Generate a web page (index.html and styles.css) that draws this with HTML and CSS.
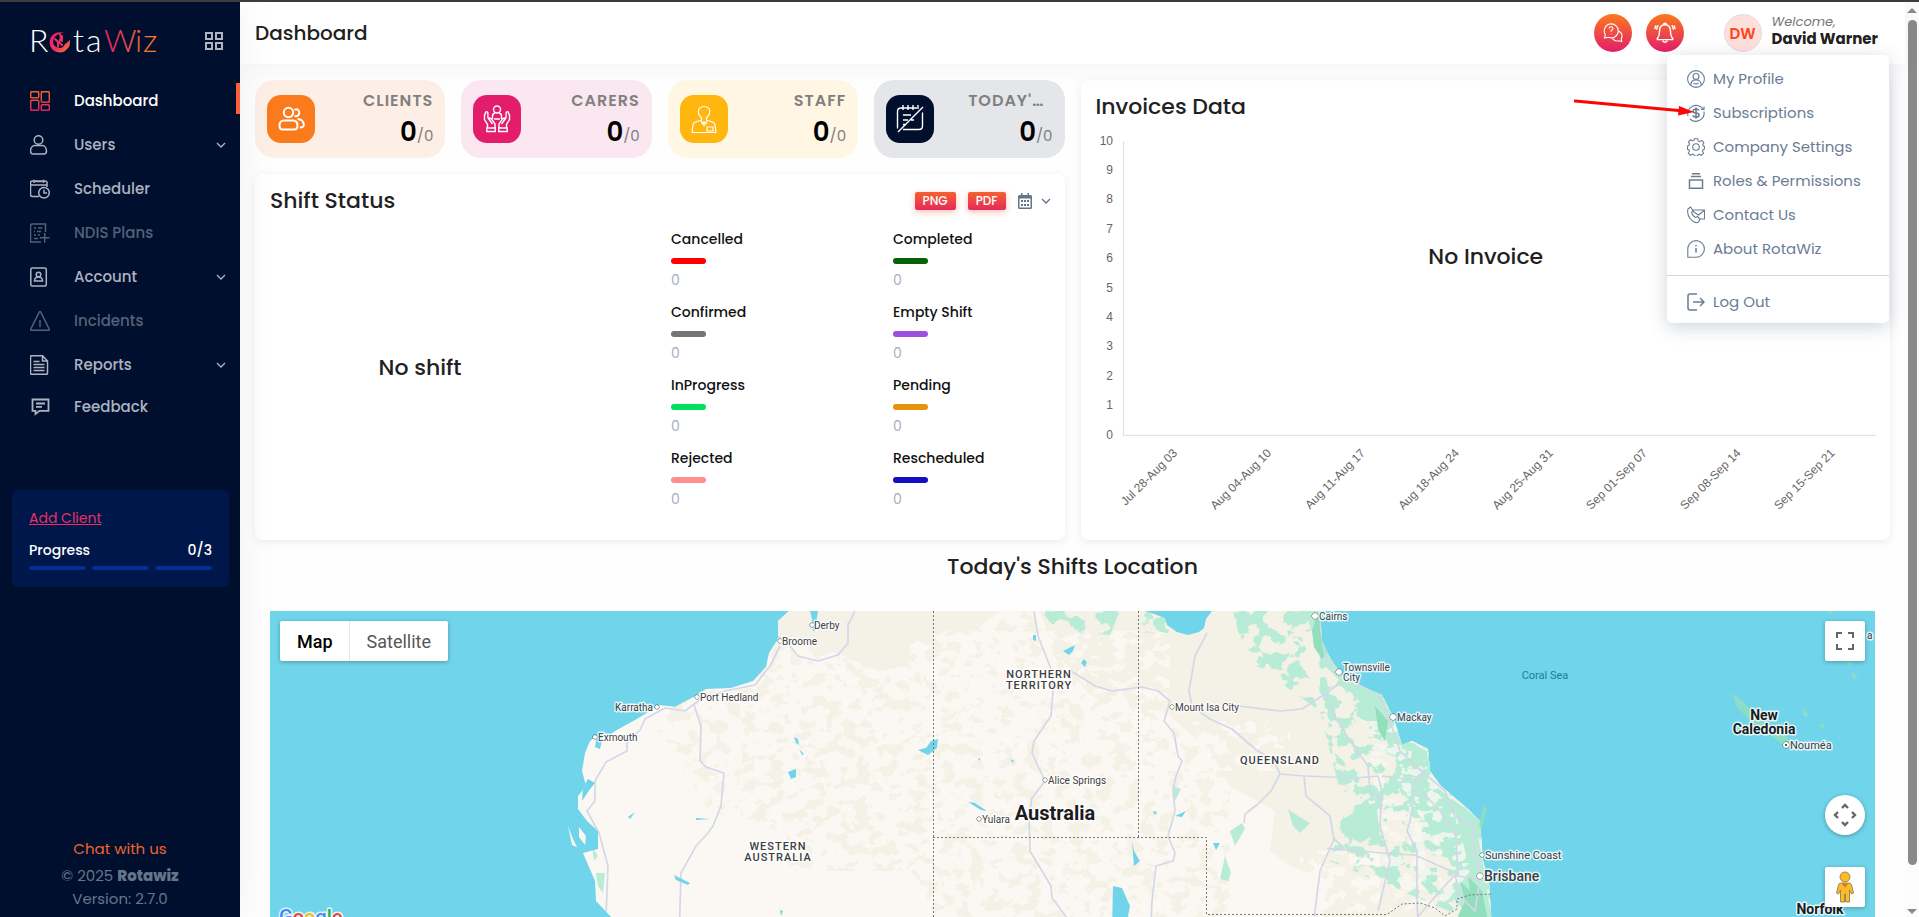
FILE: index.html
```html
<!DOCTYPE html>
<html lang="en">
<head>
<meta charset="utf-8">
<title>RotaWiz Dashboard</title>
<link rel="stylesheet" href="styles.css">
</head>
<body>
<div class="shell">
  <aside class="sidebar">
    <div class="brand">
      <svg class="logo" viewBox="0 0 128 32" role="img" aria-label="RotaWiz">
        <defs>
          <linearGradient id="wiz" gradientUnits="userSpaceOnUse" x1="72" y1="0" x2="127" y2="0"><stop offset="0" stop-color="#e61e6a"/><stop offset="1" stop-color="#f98a1c"/></linearGradient>
          <linearGradient id="swirl" x1="0" y1="0" x2="1" y2="1"><stop offset="0" stop-color="#e61e6a"/><stop offset=".6" stop-color="#ee3560"/><stop offset="1" stop-color="#f98a1c"/></linearGradient>
        </defs>
        <g class="logo-text">
          <text x="-2" y="27" fill="#fff">R</text><text x="42" y="27" fill="#fff">t</text><text x="55" y="27" fill="#fff">a</text>
          <text x="73" y="27" fill="url(#wiz)">W</text><text x="104" y="27" fill="url(#wiz)">i</text><text x="112" y="27" fill="url(#wiz)">z</text>
        </g>
        <path fill="url(#swirl)" d="M33 8C24 5 17 12 19 20c2 8 13 10 17 4 3-2 3-5 3-9-2 1-3 3-5 4l-2 3c-3 2-7 1-9-2-2-4 0-9 5-11 2-1 4-1 5-1Z"/>
        <path d="M24 14l3 3v5m2-13 1 4-2 4 3 3M31 11v5" stroke="#e8305f" stroke-width="2" fill="none" stroke-linecap="round"/>
      </svg>
      <button class="plain grid-btn" aria-label="Toggle menu"><svg viewBox="0 0 18 18" width="18" height="18" fill="none" stroke="currentColor" stroke-width="2"><path d="M1 1h6v6H1zM11 1h6v6h-6zM1 11h6v6H1zM11 11h6v6h-6z"/></svg></button>
    </div>
    <nav class="nav">
      <a href="#" class="nav-item active"><svg class="ico" viewBox="0 0 20 20"><defs><linearGradient id="dash" gradientUnits="userSpaceOnUse" x1="0" y1="0" x2="0" y2="20"><stop offset="0" stop-color="#f3652b"/><stop offset="1" stop-color="#dc2264"/></linearGradient></defs><g stroke="url(#dash)"><rect x=".7" y=".7" width="8" height="6" rx="1"/><rect x=".7" y="9.300" width="8" height="10" rx="1"/><rect x="11.300" y=".7" width="8" height="10.500" rx="1"/><rect x="11.300" y="13.700" width="8" height="5.600" rx="1"/></g></svg><span>Dashboard</span></a>
      <a href="#" class="nav-item"><svg class="ico" viewBox="0 0 20 20"><circle cx="8.500" cy="5" r="4.300"/><path d="M5 10.500h7c3 0 4.500 3 4.500 5.500 0 2.500-1 3-2.500 3H3c-1.500 0-2.500-.5-2.500-3 0-2.500 1.500-5.500 4.500-5.500Z"/></svg><span>Users</span><svg class="chev" viewBox="0 0 10 6"><path d="m1 1 4 4 4-4"/></svg></a>
      <a href="#" class="nav-item"><svg class="ico" viewBox="0 0 20 20"><path d="M9 17.500H2.500q-2 0-2-2V4q0-2 2-2H15q2 0 2 2v4M.5 6H17M4 4V.7M13.500 4V.7M5 2.500h7"/><circle cx="14" cy="13.800" r="5.300"/><path d="M14 10.800v3.200h3"/></svg><span>Scheduler</span></a>
      <a href="#" class="nav-item dim"><svg class="ico" viewBox="0 0 20 20"><path d="M15.500 9V1H2.500q-2 0-2 2v16H11M4 5h2M8 5h4M4 8.500h1M7 8.500h4M4 12h2M8 12h2M4 15.500h4M14.700 10v9.500M9.800 14.700h9.700"/></svg><span>NDIS Plans</span></a>
      <a href="#" class="nav-item"><svg class="ico" viewBox="0 0 20 20"><rect x=".8" y="1" width="15.500" height="18" rx="1.500"/><circle cx="8.500" cy="7.500" r="2.300"/><path d="M4.500 14c0-2.500 1.800-4 4-4s4 1.500 4 4Z"/></svg><span>Account</span><svg class="chev" viewBox="0 0 10 6"><path d="m1 1 4 4 4-4"/></svg></a>
      <a href="#" class="nav-item dim"><svg class="ico" viewBox="0 0 20 20"><path d="M9.200 1.200q.8-1.200 1.600 0l8.500 17q.4 1-.8 1h-17q-1.200 0-.8-1ZM10 9v7"/></svg><span>Incidents</span></a>
      <a href="#" class="nav-item"><svg class="ico" viewBox="0 0 20 20"><path d="M12.500.7h-11q-1 0-1 1v16.600q0 1 1 1h15q1 0 1-1V6Zm0 0V6h5M3.500 6.500h6M3.500 9.500h11M3.500 12.500h11M3.500 15.500h11"/></svg><span>Reports</span><svg class="chev" viewBox="0 0 10 6"><path d="m1 1 4 4 4-4"/></svg></a>
      <a href="#" class="nav-item last"><svg class="ico" viewBox="0 0 20 20"><path stroke-width="1.800" d="M2.500 2.500h16v11.300H9.500l-4 3.200v-3.200h-3ZM6 6.500h9M6 9.800h6"/></svg><span>Feedback</span></a>
    </nav>
    <section class="progress">
      <a href="#">Add Client</a>
      <div class="progress-row"><span>Progress</span><span>0/3</span></div>
      <div class="progress-bars"><i></i><i></i><i></i></div>
    </section>
    <footer class="side-foot">
      <a href="#">Chat with us</a>
      <p>© 2025 <b>Rotawiz</b></p>
      <p>Version: 2.7.0</p>
    </footer>
  </aside>

  <div class="page">
    <header class="topbar">
      <h1>Dashboard</h1>
      <div class="top-actions">
        <button class="plain round" aria-label="Help"><svg viewBox="0 0 20 20" width="20" height="20"><path d="M1.500 15 2.300 11.500A7 7 0 1 1 5.500 14.300ZM6 5.500q.3-1.700 2-1.700t2 1.700q0 1-2 2.300v1M8 10.700v.8M15.500 8q4 2 3.500 6l-.8 1.700.5 2.800-2.800-.7q-5 1-6.900-3.500"/></svg></button>
        <button class="plain round" aria-label="Notifications"><svg viewBox="0 0 20 20" width="22" height="22"><path stroke-width="1.300" d="M8.800 2q0-1 1.200-1t1.200 1M3 16h14q.6-.8-.6-1.800Q15 12.500 15 8.500 15 2.500 10 2.500T5 8.500q0 4-1.400 5.700Q2.400 15.200 3 16ZM7.800 17q2.200 2.800 4.400 0M3.900 3Q2.500 4.500 2.400 7M1.900 3Q.9 4.500.8 6.500M16.100 3q1.400 1.500 1.500 4M18.100 3q1 1.500 1.100 3.500"/></svg></button>
        <div class="user">
          <span class="avatar">DW</span>
          <div class="user-name"><em>Welcome,</em><strong>David Warner</strong></div>
        </div>
      </div>
    </header>

    <main class="content">
      <div class="cols">
        <div class="left">
          <div class="stats">
            <article class="stat orange"><span class="tile"><svg viewBox="0 0 30 30"><circle cx="12.500" cy="8.500" r="4.700"/><path d="M8 16.500h9c3 0 4.500 2 4.500 5 0 2.500-1 4-3 4h-12c-2 0-3-1.500-3-4 0-3 1.500-5 4.500-5ZM18.500 6q2-1.500 4 .3 1.600 2.200 0 4.700-1.700 2-4 .8M21.500 15q6 .5 6.300 5.500.2 3-4 3"/></svg></span><div class="stat-text"><h2>CLIENTS</h2><p><b>0</b>/0</p></div></article>
            <article class="stat pink"><span class="tile"><svg viewBox="0 0 30 30"><circle cx="15" cy="5.500" r="3.500"/><path d="M10.500 15v-3q0-2.500 2.500-3M19.500 15v-3q0-2.500-2.500-3M12 15h6M5.500 24v-3.500l-3-5v-4l1.300-3.500q1-1 2 .5L6 14l1.500 2v-2q2 0 3 2.500l2.500 3.500v4M24.500 24v-3.500l3-5v-4L26.200 8q-1-1-2 .5L24 14l-1.500 2v-2q-2 0-3 2.500L17 20v4M7.500 16l3 4M22.500 16l-3 4M4.800 24h8.500v3.500H4.800ZM16.700 24h8.500v3.500h-8.500Z"/></svg></span><div class="stat-text"><h2>CARERS</h2><p><b>0</b>/0</p></div></article>
            <article class="stat yellow"><span class="tile"><svg viewBox="0 0 30 30"><path d="M12.500 16.500v-2.700Q10 12 9.500 9q-.7-5 3.500-6 2-1.500 4.500 0 4 1 3 6-.5 3-3 4.800v2.700M12.500 16l-7 2.500Q3.300 20 3.300 28.500h23.400q0-8.500-2.200-10L17.500 16M12 16.500l1.300 3.500 1.700-2.500 1.700 2.500 1.300-3.500M15 17.500v5M18 23h6v4h-6Z"/></svg></span><div class="stat-text"><h2>STAFF</h2><p><b>0</b>/0</p></div></article>
            <article class="stat navy"><span class="tile"><svg viewBox="0 0 30 30"><path d="M2.500 24.500V7.500q0-3.500 3.500-3.500h16M27.500 8.500V22q0 3.500-3.500 3.500H8M8 1v5M13 1v5M18 1v5M23 1v4M3 28 28 3M8 11h8M8 16h5M16 16h3M8 20.500h3"/></svg></span><div class="stat-text"><h2>TODAY'S SHIFTS</h2><p><b>0</b>/0</p></div></article>
          </div>
          <section class="card shift">
            <div class="card-head">
              <h3>Shift Status</h3>
              <button class="plain export">PNG</button><button class="plain export">PDF</button>
              <button class="plain date" aria-label="Choose period"><svg width="14" height="16" viewBox="0 0 14 16"><path fill="currentColor" fill-rule="evenodd" d="M3 0h1.500v2h5V0H11v2h1.500Q14 2 14 3.500v11q0 1.500-1.500 1.500h-11Q0 16 0 14.500v-11Q0 2 1.500 2H3ZM1.500 5.500v9h11v-9ZM3 7h2v2H3Zm3 0h2v2H6Zm3 0h2v2H9Zm-6 4h2v2H3Zm3 0h2v2H6Zm3 0h2v2H9Z"/></svg><svg class="chev" viewBox="0 0 10 6"><path d="m1 1 4 4 4-4"/></svg></button>
            </div>
            <div class="shift-body">
              <p class="empty">No shift</p>
              <dl class="legend">
                <div><dt>Cancelled</dt><dd class="c-red">0</dd></div>
                <div><dt>Completed</dt><dd class="c-green">0</dd></div>
                <div><dt>Confirmed</dt><dd class="c-gray">0</dd></div>
                <div><dt>Empty Shift</dt><dd class="c-purple">0</dd></div>
                <div><dt>InProgress</dt><dd class="c-lime">0</dd></div>
                <div><dt>Pending</dt><dd class="c-amber">0</dd></div>
                <div><dt>Rejected</dt><dd class="c-rose">0</dd></div>
                <div><dt>Rescheduled</dt><dd class="c-blue">0</dd></div>
              </dl>
            </div>
          </section>
        </div>
        <section class="card invoices">
          <h3>Invoices Data</h3>
          <svg class="chart" viewBox="0 0 780 395">
            <path d="M27.500 19v295M27 313.500h753" stroke="#dedede" fill="none"/>
            <g class="ticks">
              <text x="17" y="23">10</text><text x="17" y="52">9</text><text x="17" y="81">8</text><text x="17" y="111">7</text><text x="17" y="140">6</text><text x="17" y="170">5</text><text x="17" y="199">4</text><text x="17" y="228">3</text><text x="17" y="258">2</text><text x="17" y="287">1</text><text x="17" y="317">0</text>
              <text transform="translate(82 332) rotate(-45)">Jul 28-Aug 03</text>
              <text transform="translate(176 332) rotate(-45)">Aug 04-Aug 10</text>
              <text transform="translate(270 332) rotate(-45)">Aug 11-Aug 17</text>
              <text transform="translate(364 332) rotate(-45)">Aug 18-Aug 24</text>
              <text transform="translate(458 332) rotate(-45)">Aug 25-Aug 31</text>
              <text transform="translate(552 332) rotate(-45)">Sep 01-Sep 07</text>
              <text transform="translate(646 332) rotate(-45)">Sep 08-Sep 14</text>
              <text transform="translate(740 332) rotate(-45)">Sep 15-Sep 21</text>
            </g>
            <text class="chart-empty" x="390" y="142">No Invoice</text>
          </svg>
        </section>
      </div>

      <h3 class="map-title">Today's Shifts Location</h3>
      <section class="map" aria-label="Map of Australia">
        <svg class="map-svg" viewBox="0 0 1605 330" preserveAspectRatio="xMidYMin slice">
          <defs>
            <filter id="scrub" x="0" y="0" width="1" height="1" color-interpolation-filters="sRGB"><feTurbulence type="fractalNoise" baseFrequency=".07 .09" numOctaves="3" seed="4"/><feColorMatrix values="0 0 0 0 .957  0 0 0 0 .945  0 0 0 0 .9  20 0 0 0 -10.700"/><feComposite operator="in" in2="SourceGraphic"/></filter>
            <filter id="pale" x="0" y="0" width="1" height="1" color-interpolation-filters="sRGB"><feTurbulence type="fractalNoise" baseFrequency=".07 .09" numOctaves="3" seed="11"/><feColorMatrix values="0 0 0 0 .984  0 0 0 0 .973  0 0 0 0 .953  20 0 0 0 -10.500"/><feComposite operator="in" in2="SourceGraphic"/></filter>
            <filter id="forest" x="0" y="0" width="1" height="1" color-interpolation-filters="sRGB"><feTurbulence type="fractalNoise" baseFrequency=".06 .07" numOctaves="3" seed="8"/><feColorMatrix values="0 0 0 0 .722  0 0 0 0 .925  0 0 0 0 .839  0 20 0 0 -10.200"/><feComposite operator="in" in2="SourceGraphic"/></filter>
            <clipPath id="land"><path d="M519 0 508 10 508 28 499 42 496 56 483 70 461 77 436 78 427 84 405 96 390 94 365 109 345 120 340 124 334 122 330 138 325 136 327 125 320 130 315 142 312 160 316 175 308 185 308 198 317 210 328 220 328 238 313 242 325 270 326 290 342 307 350 330H1222L1222 318 1219 270 1213 250 1210 210 1198 198 1170 174 1160 160 1158 138 1142 130 1132 134 1124 108 1112 84 1098 78 1072 65 1060 47 1052 30 1050 0Z"/></clipPath>
          </defs>
          <rect width="1605" height="330" fill="#70d4ea"/>
          <g clip-path="url(#land)">
            <rect x="280" width="960" height="330" fill="#fbf8f3"/>
            <path filter="url(#scrub)" d="M420 60 560 0H960V330H680L640 260 440 200 380 120Z"/>
            <path filter="url(#scrub)" d="M500 60H640V260H520Z"/>
            <path fill="#f4f1e6" d="M508 0H730L690 30 660 50 610 60 560 40 525 30 508 42ZM770 0H1240V330H1045L1060 270 1020 255 1000 240 1005 200 960 175 940 140 900 105 870 95 850 80 830 90 790 60Z"/>
            <path filter="url(#pale)" d="M640 20H900V130H640ZM920 110H1020V160H920ZM1030 240H1110V330H1030Z"/>
            <path filter="url(#scrub)" d="M800 60H860V170H780Z"/>
            <path filter="url(#forest)" d="M770 0H850L840 24 790 22ZM930 0H960L980 50 1050 100 1075 200 1060 250 1250 330V0ZM868 0H905L898 22H870Z"/>
            <path fill="#b9ecd7" d="M1035 0H1056L1062 40 1076 66 1110 80 1130 125 1160 142 1165 175 1205 205 1214 260 1225 330H1190L1195 300 1180 285 1186 265 1175 240 1165 225 1150 200 1130 180 1125 145 1105 110 1085 85 1055 55 1045 30ZM1070 210 1095 195 1110 190 1112 220 1090 232 1072 222ZM1018 198 1028 205 1040 212 1030 222 1023 215ZM960 220 972 212 975 218 965 235ZM955 245 961 262 958 270 950 268ZM902 175 911 178 905 190ZM322 235 328 245 324 250ZM326 262 335 262 333 282 328 275Z"/>
            <path filter="url(#pale)" opacity=".8" d="M1095 110H1140L1180 180 1200 260 1170 300H1120Z"/>
            <path fill="#92dfbd" d="M1042 20 1048 0 1052 12 1057 42 1052 48 1044 36ZM1105 95 1118 110 1115 130 1108 118ZM1190 270 1200 280 1198 265 1212 280 1218 310 1200 318 1188 305 1195 290Z"/>
            <g class="roads">
              <path d="M585 0 578 14V32L568 44 548 50 528 45 514 28 505 25 490 22M510 35 500 55 485 74 455 80 431 88 415 100 395 97 375 108 370 119 357 132V140L336 151 325 170V190L317 200 329 222 338 255 336 305 342 330M424 94 431 115 430 150 436 156 454 162 451 195 443 215 438 222 426 235 411 262 409 330"/>
              <path d="M764 0 768 25 781 58 783 80 781 105 764 130 762 142 775 170 762 187 759 205 760 240 781 275 782 287 801 312M801 60 825 75 842 80 872 76 888 80 900 90 894 110 904 122 908 145 912 150 906 165 903 180 905 200 898 225 905 242 903 250 896 252 886 255 882 290 880 330M937 22 925 45 919 80 922 95 940 108 962 118 985 138 1004 150 1010 163 1035 165 1085 167 1108 165M969 95 1010 100 1032 98 1055 83 1070 72M1055 83 1062 100 1080 130 1098 155 1100 180 1110 190M1010 163 1001 180 988 193 975 203 974 212M1034 165 1036 185 1060 205 1064 228 1074 237M1064 228 1050 260 1045 300 1043 330M1057 237 1112 242 1145 244 1185 262M1050 0 1051 20 1056 50 1070 65 1090 75 1108 82 1120 110 1130 140 1153 161 1175 180 1185 205 1203 215 1205 240 1210 260M1153 161 1145 180 1140 210 1137 220 1147 240 1147 290 1148 310M1112 165 1144 169 1153 161M1150 178 1170 200 1186 225 1188 265 1210 268M1140 315 1170 280 1185 264 1190 285 1205 300 1210 268M1108 165 1112 180 1110 215 1120 250 1108 300"/>
            </g>
            <path class="water" d="M540 0 542 8 543 20 545 20 548 0ZM876 0 895 7 897 14 907 21 918 24 929 21 934 17 936 8 942 0ZM793 40 805 34 803 40 799 44ZM811 52 814 48 817 51 815 56ZM648 139 656 137 661 130 668 128 667 137 658 144ZM698 191 705 192 717 200 711 199ZM843 275 852 277 860 295 858 305 868 320H842ZM862 230 864 240 870 250 864 255ZM943 232 950 232 946 239ZM905 205 916 200 912 206ZM518 161 526 158 526 166 521 168ZM524 126 528 128 529 134 526 132ZM529 138 534 143 532 144ZM325 172 320 178 312 190 313 176 318 168ZM404 264 420 272 418 274 406 269ZM358 206 365 201 360 208ZM426 207 440 208 426 209ZM510 299 513 300 511 305ZM763 24 766 24 766 30 763 29ZM708 148 710 147 710 150ZM740 148 744 150 743 152ZM883 200 887 201 885 204Z"/>
          </g>
          <path fill="#fbf8f3" d="M298 215 303 228 307 236 302 234ZM309 216 316 225 315 234 309 226Z"/>
          <path fill="#92dfbd" opacity=".8" d="M1214 194 1217 198 1211 220 1209 214ZM1462 82 1475 92 1485 104 1495 112 1514 124 1522 130 1526 140 1516 136 1500 124 1480 110 1467 96ZM1532 95 1540 106 1534 105ZM1549 112 1556 114 1552 118ZM1581 60 1588 66 1584 69ZM1575 50 1583 52 1580 55ZM1557 0 1564 1 1559 3Z"/>
          <g class="borders">
            <path d="M663.500 0V330M868.500 0V226M663 226.500H936.500V303.500H1117L1132 293 1150 292 1165 297 1175 305 1187 298V288L1200 284 1222 283"/>
          </g>
          <g class="places">
            <g class="pins"><circle cx="542" cy="14" r="2"/><circle cx="510" cy="30" r="2"/><circle cx="427" cy="86" r="2"/><circle cx="387" cy="96" r="2"/><circle cx="325" cy="126" r="2"/><circle cx="902" cy="96" r="2"/><circle cx="775" cy="169" r="2"/><circle cx="709" cy="208" r="2"/><circle cx="1045" cy="5" r="3"/><circle cx="1069" cy="61" r="3"/><circle cx="1123" cy="106" r="3"/><circle cx="1212" cy="244" r="2"/><circle cx="1210" cy="265" r="3"/><circle cx="1516" cy="134" r="3"/></g>
            <circle cx="1516" cy="134" r="1" fill="#222"/>
            <text x="544" y="18">Derby</text><text x="512" y="34">Broome</text><text x="430" y="90">Port Hedland</text><text x="383" y="100" text-anchor="end">Karratha</text><text x="328" y="130">Exmouth</text>
            <text x="905" y="100">Mount Isa City</text><text x="778" y="173">Alice Springs</text><text x="712" y="212">Yulara</text>
            <text x="1049" y="9">Cairns</text><text x="1073" y="60">Townsville</text><text x="1073" y="70">City</text><text x="1127" y="110">Mackay</text><text x="1597" y="28">a</text>
            <g class="town"><text x="1215" y="248">Sunshine Coast</text><text x="1520" y="138">Nouméa</text></g>
            <g class="city"><text x="1214" y="270">Brisbane</text></g>
            <g class="state"><text x="769" y="67">NORTHERN</text><text x="769" y="78">TERRITORY</text><text x="508" y="239">WESTERN</text><text x="508" y="250">AUSTRALIA</text><text x="1010" y="153">QUEENSLAND</text></g>
            <g class="country"><text x="785" y="209" class="big">Australia</text><text x="1494" y="109">New</text><text x="1494" y="123">Caledonia</text><text x="1550" y="303">Norfolk</text></g>
            <text x="1275" y="68" class="sea">Coral Sea</text>
            <text class="google" x="9" y="313"><tspan fill="#4285f4">G</tspan><tspan fill="#ea4335">o</tspan><tspan fill="#fbbc05">o</tspan><tspan fill="#4285f4">g</tspan><tspan fill="#34a853">l</tspan><tspan fill="#ea4335">e</tspan></text>
          </g>
        </svg>
        <div class="map-type"><button class="plain on">Map</button><button class="plain">Satellite</button></div>
        <div class="map-tools">
          <button class="plain tool" aria-label="Full screen"><svg width="18" height="18" viewBox="0 0 18 18" fill="none" stroke="#666" stroke-width="2"><path d="M1 6V1h5M12 1h5v5M17 12v5h-5M6 17H1v-5"/></svg></button>
          <button class="plain tool pan" aria-label="Map camera controls"><svg width="24" height="24" viewBox="0 0 24 24" fill="none" stroke="#666" stroke-width="2.400"><path d="m9 5 3-3 3 3M9 19l3 3 3-3M5 9l-3 3 3 3M19 9l3 3-3 3"/></svg></button>
          <button class="plain tool" aria-label="Street View"><svg width="18" height="32" viewBox="0 0 18 32" stroke="#8a7340" stroke-width=".8" fill="#fbbc2c"><path d="M5 12h8q2 0 2.500 2L17.500 22l-2 1-2-4v12H9.500v-8h-1v8h-4V19l-2 4-2-1 2-8Q3 12 5 12Z"/><circle cx="9" cy="6" r="5"/><path stroke="none" fill="#e0761d" d="m5.500 12.500 3.500 4 3.500-4Z"/></svg></button>
        </div>
      </section>
    </main>

    <nav class="menu" aria-label="Account">
      <a href="#"><svg viewBox="0 0 18 18"><circle cx="9" cy="9" r="8.400"/><circle cx="9" cy="6.500" r="3"/><path d="M3.800 15q0-5 5.200-5t5.200 5M6.500 13q2.500 2 5 0"/></svg>My Profile</a>
      <a href="#"><svg viewBox="0 0 18 18"><path d="M1 12A8.400 8.400 0 0 1 16 5M17 7.500A8.400 8.400 0 0 1 3 15M17 2.500v3h-3"/><path stroke-width="1.600" d="M12 6.500Q11.500 5 9 5T6 7q0 2 3 2t3 2.200Q12 13 9 13t-3-1.700M9 3.500v11"/></svg>Subscriptions</a>
      <a href="#"><svg viewBox="0 0 18 18"><circle cx="9" cy="9" r="3.300"/><path d="M7.300.7h3.400l.5 2.200 1.600.7 2-1.200 2.100 2.200-1.200 2 .6 1.400 1.200.4v2.600l-1.500.7-.6 1.500 1.200 2-2.300 2.200-1.900-1.200-1.500.7-.5 1.200H7.600l-.6-1.500-1.500-.6-2 1.200-2.200-2.100 1.200-2.200-.6-1.300-1.400-.4V8l1.500-.7.6-1.400L1.400 4l2.200-2.200 1.900 1.200L7 2.400Z"/></svg>Company Settings</a>
      <a href="#"><svg viewBox="0 0 18 18"><path stroke-width="1.500" d="M5 1.700h8M4 4.500h10M2.500 8h13v8.200h-13Z"/></svg>Roles &amp; Permissions</a>
      <a href="#"><svg viewBox="0 0 18 18"><path d="M5 4h12.500v9H12M5.500 5l6 4 5.700-4.500M1 3l2.500-2L6 4.500 4.500 6.500q1 3.500 4 5l2-1L13 13l-1.500 3q-4 2-8-3T1 3Z"/></svg>Contact Us</a>
      <a href="#"><svg viewBox="0 0 18 18"><path d="M.8 17.200V9A8.300 8.300 0 1 1 9 17.200Z"/><path stroke-width="1.500" d="M9 8v4.500M9 5v1.300"/></svg>About RotaWiz</a>
      <hr>
      <a href="#"><svg viewBox="0 0 18 18"><path stroke-width="1.500" d="M10 1H3Q1 1 1 3v12q0 2 2 2h7M6 9h11M13 5l4 4-4 4"/></svg>Log Out</a>
      <svg class="pointer" viewBox="0 0 120 24"><path d="M1 9 110 19" stroke="#fd0505" stroke-width="3" stroke-linecap="round"/><path d="m105 14 15 6-16 3.500Z" fill="#fd0505"/></svg>
    </nav>
  </div>
  <div class="scroll" aria-hidden="true"><i class="up"></i><i class="thumb"></i><i class="down"></i></div>
</div>
</body>
</html>
```
FILE: styles.css
```css
* { box-sizing: border-box; }
body { margin: 0; font-family: Poppins, Inter, "Liberation Sans", sans-serif; color: #212121; }
h1, h2, h3, p, dl, dd { margin: 0; font-weight: 500; }
a { text-decoration: none; color: inherit; }
.plain { border: 0; padding: 0; margin: 0; background: none; font: inherit; color: inherit; cursor: pointer; }

.shell { display: flex; height: 100vh; overflow: hidden; border-top: 2px solid #3c3c3c; }

/* sidebar */
.sidebar { width: 240px; flex: none; display: flex; flex-direction: column; background: #000f2e; color: #adb3c0; box-shadow: 0 0 40px rgba(0, 0, 0, .06); position: relative; z-index: 2; }
.brand { display: flex; align-items: center; justify-content: space-between; padding: 22px 17px 0 31px; height: 56px; }
.logo { width: 128px; height: 32px; overflow: visible; }
.logo-text { font-family: Lato, sans-serif; font-weight: 300; font-size: 32px; }
.grid-btn { line-height: 0; color: #adb3c0; }
.nav { display: flex; flex-direction: column; padding-top: 21px; }
.nav-item { display: flex; align-items: center; height: 44px; padding: 0 14px 0 30px; font-size: 15px; line-height: 22px; font-weight: 500; position: relative; }
.nav-item span { flex: 1; padding-left: 24px; }
.nav-item.last { height: 40px; }
.nav-item.dim { color: #566078; }
.nav-item.active { color: #fff; }
.nav-item.active::after { content: ""; position: absolute; right: 0; top: 4px; width: 4px; height: 31px; background: #f9603a; }
.ico { width: 20px; height: 20px; fill: none; stroke: currentColor; stroke-width: 1.500; }
.chev { width: 10px; height: 6px; fill: none; stroke: currentColor; stroke-width: 1.300; }
.progress { margin: 63px 11px 0 12px; padding: 16px 17px; height: 97px; border-radius: 6px; background: #00174b; font-size: 14px; line-height: 24px; }
.progress a { color: #e8305f; text-decoration: underline; }
.progress-row { display: flex; justify-content: space-between; padding-top: 8px; color: #fff; font-weight: 500; }
.progress-bars { display: flex; gap: 6px; padding-top: 4px; }
.progress-bars i { flex: 1; height: 4px; border-radius: 2px; background: #002f95; }
.side-foot { margin-top: auto; padding-bottom: 7px; text-align: center; font-size: 15px; line-height: 23px; color: #67758b; }
.side-foot a { display: block; color: #f0622d; padding-bottom: 4px; }
.side-foot p { font-weight: 400; }
.side-foot b { font-weight: 800; }

/* top bar */
.page { flex: 1; min-width: 0; position: relative; display: flex; flex-direction: column; background: #fefefe; }
.topbar { height: 62px; flex: none; display: flex; align-items: center; justify-content: space-between; padding: 0 27px 0 15px; background: #fff; box-shadow: 0 0 30px rgba(0, 0, 0, .05); position: relative; z-index: 1; }
.topbar h1 { font-size: 20px; line-height: 30px; }
.top-actions { display: flex; align-items: center; gap: 14px; }
.round { width: 38px; height: 38px; border-radius: 50%; display: grid; place-items: center; background: linear-gradient(#fb7a1c, #e31c6c); }
.round svg { fill: none; stroke: #fff; stroke-width: 1.100; }
.user { display: flex; align-items: center; gap: 10px; padding-left: 26px; }
.avatar { width: 38px; height: 38px; border-radius: 50%; display: grid; place-items: center; border: 1px solid #e2dcdf; background: #ffdfda; color: #ff4423; font-size: 15px; font-weight: 600; }
.user-name { display: flex; flex-direction: column; padding-bottom: 6px; line-height: 17px; }
.user-name em { font-size: 13px; color: #777; }
.user-name strong { font-size: 15px; font-weight: 700; white-space: nowrap; }

/* content */
.content { padding: 16px 15px 0; }
.cols { display: grid; grid-template-columns: 1fr 1fr; gap: 16px; height: 460px; }
.left { display: flex; flex-direction: column; gap: 16px; min-width: 0; }
.stats { display: grid; grid-template-columns: repeat(4, minmax(0, 1fr)); gap: 16px; }
.stat { display: flex; align-items: center; gap: 12px; height: 78px; padding: 0 12px; border-radius: 20px; }
.tile { width: 48px; height: 48px; flex: none; border-radius: 14px; display: grid; place-items: center; }
.tile svg { width: 30px; height: 30px; fill: none; stroke: #fff; stroke-width: 1.400; }
.stat-text { flex: 1; min-width: 0; padding-top: 5px; text-align: right; color: #808080; }
.stat h2 { font-size: 16px; line-height: 24px; font-weight: 600; letter-spacing: 1px; white-space: nowrap; overflow: hidden; text-overflow: ellipsis; }
.stat p { font-size: 15px; line-height: 38px; font-weight: 400; }
.stat b { font-size: 26px; color: #000; font-weight: 600; }
.orange { background: #feefe6; } .orange .tile { background: #fb7a1c; }
.orange .tile svg { stroke-width: 2; }
.pink { background: #fbe7f0; } .pink .tile { background: #e31c6c; }
.yellow { background: #fff6e3; } .yellow .tile { background: #ffb60e; }
.yellow .tile svg { stroke-width: 1.200; }
.navy { background: #e5e6ea; } .navy .tile { background: #000f2e; }
.navy h2 { padding-left: 22px; }

.card { background: #fff; border-radius: 8px; box-shadow: 0 2px 8px rgba(60, 80, 110, .1); padding: 12px 15px; }
h3 { font-size: 22px; line-height: 30px; }
.shift { flex: 1; display: flex; flex-direction: column; padding-right: 14px; }
.card-head { display: flex; align-items: center; gap: 12px; }
.card-head h3 { flex: 1; }
.export { height: 18px; padding: 0 8px; border-radius: 2px; background: linear-gradient(#f4612f, #e6295e); color: #fff; font-size: 12px; line-height: 18px; font-weight: 500; box-shadow: 0 2px 6px rgba(250, 96, 50, .4); }
.date { display: flex; align-items: center; gap: 9px; color: #64748b; }
.shift-body { display: flex; flex: 1; }
.empty { width: 401px; padding: 137px 101px 0 0; text-align: center; font-size: 22px; line-height: 30px; }
.legend { flex: 1; display: grid; grid-template-columns: 222px 1fr; grid-auto-rows: 73px; padding-top: 11px; }
.legend dt { font-size: 14px; line-height: 24px; font-weight: 500; color: #111; }
.legend dd { font-size: 14px; line-height: 20px; font-weight: 400; color: #a5afbf; }
.legend dd::before { content: ""; display: block; width: 35px; height: 6px; margin: 7px 0 6px; border-radius: 3px; background: var(--c); }
.c-red { --c: #ff0000; } .c-green { --c: #066206; } .c-gray { --c: #757575; } .c-purple { --c: #9d4fe2; }
.c-lime { --c: #00e05f; } .c-amber { --c: #e8920c; } .c-rose { --c: #ff8f8f; } .c-blue { --c: #1410bd; }

.chart { display: block; width: 100%; overflow: visible; }
.ticks { font: 12px "Liberation Sans", sans-serif; fill: #666; text-anchor: end; }
.chart-empty { font-size: 22px; font-weight: 500; text-anchor: middle; fill: #212121; }

/* map */
.map-title { text-align: center; padding: 12px 0 29px; }
.map { position: relative; height: 330px; margin: 0 15px; }
.map-svg { display: block; width: 100%; height: 100%; font-family: Roboto, sans-serif; }
.water { fill: #70d4ea; }
.roads { fill: none; stroke: #d3d8e8; stroke-width: 1.700; stroke-linejoin: round; }
.borders { fill: none; stroke: #777; stroke-width: 1; stroke-dasharray: 2 2; }
.places { font-size: 10px; fill: #3c4043; stroke: #fff; stroke-width: 3px; stroke-opacity: .8; paint-order: stroke; stroke-linejoin: round; }
.pins { fill: #fff; stroke: #333; stroke-width: 1px; stroke-opacity: 1; }
.town { font-size: 11px; }
.city { font-size: 14px; font-weight: 500; }
.state { font-size: 11px; font-weight: 500; letter-spacing: 1px; text-anchor: middle; }
.country { font-size: 14px; font-weight: 700; text-anchor: middle; fill: #1b1c1e; }
.big { font-size: 20px; }
.sea { font-size: 11px; fill: #1d7f98; stroke: none; text-anchor: middle; }
.google { font-size: 20px; font-weight: 500; }
.map-type { position: absolute; left: 10px; top: 10px; display: flex; height: 40px; background: #fff; border-radius: 2px; box-shadow: 0 1px 4px rgba(0, 0, 0, .3); font-family: Roboto, sans-serif; font-size: 18px; color: #565656; }
.map-type button { padding: 0 17px; }
.map-type .on { font-weight: 500; color: #000; padding: 0 16px 0 17px; border-right: 1px solid #e6e6e6; }
.map-tools { position: absolute; right: 10px; top: 10px; display: grid; grid-template-rows: 142px 40px 40px; row-gap: 32px; }
.tool { width: 40px; height: 40px; background: #fff; border-radius: 2px; display: grid; place-items: center; box-shadow: 0 1px 4px rgba(0, 0, 0, .3); }
.pan { border-radius: 50%; }

/* account menu */
.menu { position: absolute; right: 16px; top: 53px; z-index: 3; width: 222px; padding: 7px 0 4px; background: #fff; border-radius: 5px; box-shadow: 0 4px 18px rgba(60, 80, 110, .25); font-size: 15px; line-height: 24px; color: #6b7c93; }
.menu a { display: flex; align-items: center; gap: 8px; padding: 5px 20px; }
.menu a svg { width: 18px; height: 18px; fill: none; stroke: currentColor; stroke-width: 1.100; }
.menu hr { margin: 9px 0; border: 0; border-top: 1px solid #cfd6dd; }
.pointer { position: absolute; left: -93px; top: 37px; width: 120px; height: 24px; }

/* page scroll track */
.scroll { width: 14px; flex: none; background: #fcfcfc; display: flex; flex-direction: column; align-items: center; padding: 6px 0 3px; }
.scroll .up { border: 5px solid transparent; border-top: 0; border-bottom-color: #8a8a8a; }
.scroll .thumb { width: 9px; height: 845px; margin-top: 7px; border-radius: 5px; background: #8a8a8a; flex: 0 1 auto; }
.scroll .down { border: 5px solid transparent; border-bottom: 0; border-top-color: #8a8a8a; margin-top: auto; }
```
